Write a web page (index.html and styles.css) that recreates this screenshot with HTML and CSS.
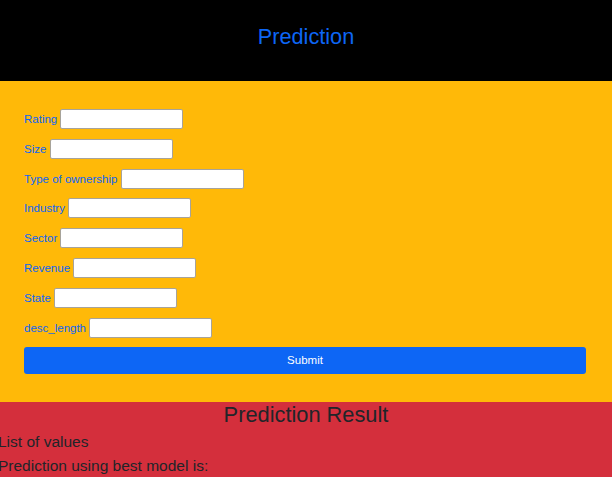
FILE: index.html
```html
<!DOCTYPE html>
<html lang="en">
<head>
<meta charset="utf-8">
<title>Prediction</title>
<link rel="stylesheet" href="styles.css">
</head>
<body>
<header class="top">
  <h1 class="top-title">Prediction</h1>
</header>
<section class="form-area">
  <form class="pred-form">
    <div class="field"><label for="rating">Rating</label><input id="rating" type="text"></div>
    <div class="field"><label for="size">Size</label><input id="size" type="text"></div>
    <div class="field"><label for="own">Type of ownership</label><input id="own" type="text"></div>
    <div class="field"><label for="industry">Industry</label><input id="industry" type="text"></div>
    <div class="field"><label for="sector">Sector</label><input id="sector" type="text"></div>
    <div class="field"><label for="revenue">Revenue</label><input id="revenue" type="text"></div>
    <div class="field"><label for="state">State</label><input id="state" type="text"></div>
    <div class="field"><label for="desc">desc_length</label><input id="desc" type="text"></div>
    <button class="submit" type="button">Submit</button>
  </form>
</section>
<section class="result">
  <h2 class="result-title">Prediction Result</h2>
  <div class="result-body">
    <p class="line">List of values</p>
    <p class="line">Prediction using best model is:</p>
  </div>
</section>
</body>
</html>
```
FILE: styles.css
```css
html, body {
  margin: 0;
  padding: 0;
}
html {
  overflow: hidden;
}
body {
  font-family: "Liberation Sans", Arial, sans-serif;
  background: #d42f3c;
  width: 612px;
}
.top {
  background: #000;
  height: 81px;
  padding-top: 24px;
  box-sizing: border-box;
}
.top-title {
  margin: 0;
  text-align: center;
  font-weight: 400;
  font-size: 21.7px;
  line-height: 25px;
  color: #0d66f5;
}
.form-area {
  background: #ffb908;
  padding: 28px 26px 28px 24px;
}
.pred-form {
  display: flex;
  flex-direction: column;
}
.field {
  display: flex;
  align-items: center;
  gap: 3.2px;
  height: 20px;
  margin-bottom: 9.8px;
}
.field label {
  font-size: 11.5px;
  color: #0d66f5;
}
.field input {
  width: 123px;
  height: 20px;
  box-sizing: border-box;
  border: 1px solid #a7a39a;
  border-radius: 2px;
  background: #fff;
  margin: 0;
  padding: 0 3px;
}
.submit {
  margin-top: -0.8px;
  height: 27px;
  width: 100%;
  border: none;
  border-radius: 3px;
  background: #0d66f5;
  color: #fff;
  font-family: "Liberation Sans", Arial, sans-serif;
  font-size: 11.5px;
}
.result {
  color: #212529;
}
.result-title {
  margin: 0;
  text-align: center;
  font-weight: 400;
  font-size: 21.8px;
  line-height: 25px;
}
.result-body {
  margin: 3px -2px 0;
}
.line {
  margin: 0;
  font-size: 15.5px;
  line-height: 24px;
}
```
